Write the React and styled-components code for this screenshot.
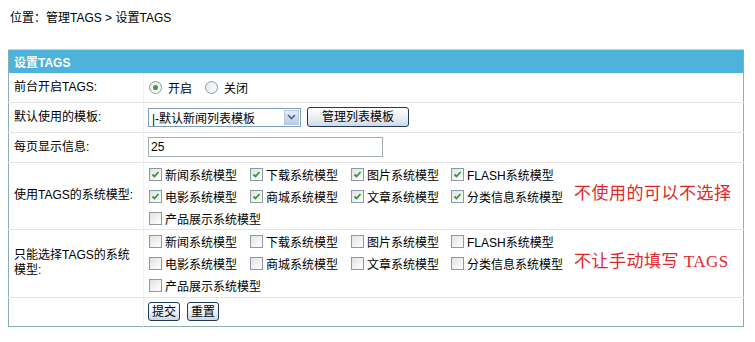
import React from 'react';
import styled, { createGlobalStyle } from 'styled-components';

const GlobalStyle = createGlobalStyle`
  body {
    margin: 0;
    background: #fff;
    font-family: "Liberation Sans", "Noto Sans CJK SC", sans-serif;
    font-size: 12px;
    color: #000;
  }
`;

const Page = styled.div`
  width: 755px;
  height: 342px;
  overflow: hidden;
`;

const Crumb = styled.div`
  padding: 11px 0 0 10px;
  height: 49px;
  line-height: 14px;
  box-sizing: border-box;
  font-size: 12px;
`;

const Table = styled.table`
  margin-left: 8px;
  width: 736px;
  border-collapse: collapse;
  border: 1px solid #86aeb3;
  table-layout: fixed;
`;

const HeadCell = styled.th`
  height: 23px;
  padding: 0 0 0 5px;
  text-align: left;
  background: #4db2dc;
  border-top: 1px solid #a8e0f2;
  color: #fff;
  font-weight: bold;
  font-size: 12px;
`;

const Row = styled.tr`
  height: ${p => p.h}px;
  border-bottom: 1px solid #e4e4e4;
  &:last-child { border-bottom: none; }
`;

const Label = styled.td`
  padding: 0 0 0 5px;
  border-right: 1px solid #f0f0f0;
  vertical-align: middle;
  line-height: 15px;
`;

const Field = styled.td`
  padding: 0 0 0 4px;
  vertical-align: middle;
`;

const Inline = styled.div`
  display: flex;
  align-items: center;
  gap: ${p => p.gap || 6}px;
`;

const RadioDot = styled.span`
  flex-shrink: 0;
  width: 11px;
  height: 11px;
  border: 1px solid #8a9aa8;
  border-radius: 50%;
  background: linear-gradient(135deg, #e6e6e6, #fff);
  display: inline-flex;
  align-items: center;
  justify-content: center;
  margin-left: 1px;
  &::after {
    content: "";
    width: 5px;
    height: 5px;
    border-radius: 50%;
    background: ${p => (p.on ? '#3c9a3c' : 'transparent')};
  }
`;

const Choice = styled.label`
  display: inline-flex;
  align-items: center;
  gap: 6px;
  margin-right: 6px;
`;

const Select = styled.div`
  width: 151px;
  height: 17px;
  border: 1px solid #7f9db9;
  display: flex;
  align-items: center;
  background: #fff;
`;

const SelectText = styled.span`
  flex: 1;
  padding-left: 3px;
`;

const SelectArrow = styled.span`
  width: 15px;
  height: 15px;
  margin-right: 1px;
  border: 1px solid #b8c8e0;
  background: linear-gradient(#e4ecfa, #bccbea);
  box-sizing: border-box;
  display: flex;
  align-items: center;
  justify-content: center;
`;

const Button = styled.button`
  height: ${p => p.h || 20}px;
  padding: 0 ${p => p.px || 12}px;
  border: 1px solid #1f3a5c;
  border-radius: 3px;
  background: linear-gradient(#ffffff 0%, #eef2f6 45%, #cfd8e4 100%);
  font-family: inherit;
  font-size: 12px;
  color: #000;
  line-height: 1;
`;

const TextInput = styled.div`
  width: 231px;
  height: 18px;
  border: 1px solid #a5acb2;
  line-height: 18px;
  padding-left: 2px;
  box-sizing: content-box;
`;

const ModelBox = styled.div`
  display: flex;
  align-items: center;
`;

const ModelGrid = styled.div`
  display: grid;
  grid-template-columns: 101px 101px 100px 118px;
  row-gap: 9px;
  padding: 1px 0 0 0;
`;

const Model = styled.label`
  display: inline-flex;
  align-items: center;
  gap: 3px;
  height: 13px;
  white-space: nowrap;
`;

const Box = styled.span`
  flex-shrink: 0;
  width: 11px;
  height: 11px;
  border: 1px solid #8c99a6;
  background: linear-gradient(135deg, #e2e2e2, #fff);
  display: inline-flex;
  align-items: center;
  justify-content: center;
  margin-left: 1px;
`;

const Note = styled.div`
  margin-left: 6px;
  margin-top: -8px;
  color: #e0282a;
  font-family: "Liberation Serif", "Noto Sans CJK SC", serif;
  font-size: 17px;
  letter-spacing: 0.5px;
  white-space: nowrap;
`;

const models = [
  '新闻系统模型', '下载系统模型', '图片系统模型', 'FLASH系统模型',
  '电影系统模型', '商城系统模型', '文章系统模型', '分类信息系统模型',
  '产品展示系统模型',
];

const Check = ({ on }) => (
  <Box>
    {on && (
      <svg width="9" height="9" viewBox="0 0 9 9">
        <path d="M1.5 4.5 L3.5 6.5 L7.5 2" fill="none" stroke="#2f9a2f" strokeWidth="1.8" />
      </svg>
    )}
  </Box>
);

const ModelPicker = ({ checkedUpTo, note }) => (
  <ModelBox>
    <ModelGrid>
      {models.map((m, i) => (
        <Model key={m}>
          <Check on={i < checkedUpTo} />
          {m}
        </Model>
      ))}
    </ModelGrid>
    <Note>{note}</Note>
  </ModelBox>
);

export default function App() {
  return (
    <Page>
      <GlobalStyle />
      <Crumb>位置：管理TAGS &gt; 设置TAGS</Crumb>
      <Table>
        <colgroup>
          <col style={{ width: 135 }} />
          <col />
        </colgroup>
        <thead>
          <tr>
            <HeadCell colSpan={2}>设置TAGS</HeadCell>
          </tr>
        </thead>
        <tbody>
          <Row h={29}>
            <Label>前台开启TAGS:</Label>
            <Field>
              <Inline gap={0}>
                <Choice><RadioDot on />开启</Choice>
                <Choice><RadioDot />关闭</Choice>
              </Inline>
            </Field>
          </Row>
          <Row h={30}>
            <Label>默认使用的模板:</Label>
            <Field>
              <Inline gap={6}>
                <Select>
                  <SelectText>|-默认新闻列表模板</SelectText>
                  <SelectArrow>
                    <svg width="9" height="6" viewBox="0 0 9 6">
                      <path d="M1 1 L4.5 4.5 L8 1" fill="none" stroke="#4d6185" strokeWidth="1.6" />
                    </svg>
                  </SelectArrow>
                </Select>
                <Button px={14}>管理列表模板</Button>
              </Inline>
            </Field>
          </Row>
          <Row h={30}>
            <Label>每页显示信息:</Label>
            <Field>
              <TextInput>25</TextInput>
            </Field>
          </Row>
          <Row h={67}>
            <Label>使用TAGS的系统模型:</Label>
            <Field>
              <ModelPicker checkedUpTo={8} note="不使用的可以不选择" />
            </Field>
          </Row>
          <Row h={68}>
            <Label>只能选择TAGS的系统<br />模型:</Label>
            <Field>
              <ModelPicker checkedUpTo={0} note="不让手动填写 TAGS" />
            </Field>
          </Row>
          <Row h={29}>
            <Label />
            <Field>
              <Inline gap={7}>
                <Button h={19} px={3}>提交</Button>
                <Button h={19} px={3}>重置</Button>
              </Inline>
            </Field>
          </Row>
        </tbody>
      </Table>
    </Page>
  );
}
